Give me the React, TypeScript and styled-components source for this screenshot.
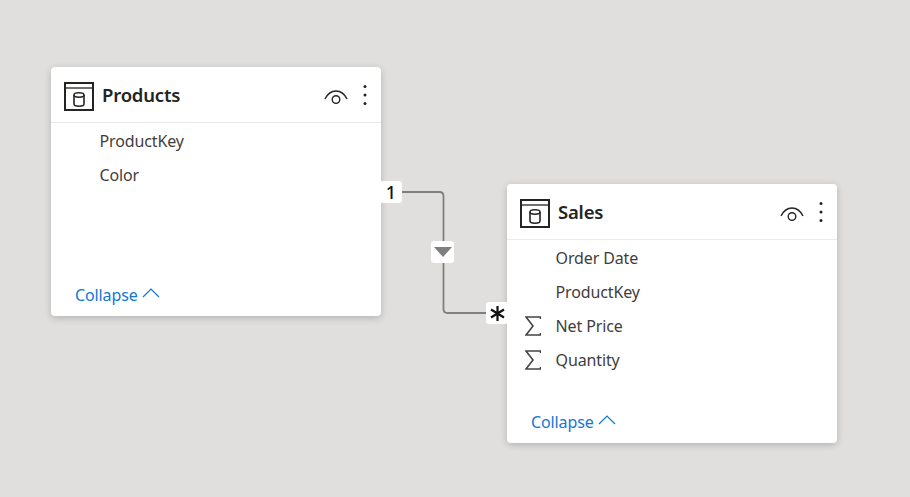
import styled, { createGlobalStyle } from 'styled-components';

const Global = createGlobalStyle`
  html, body { margin: 0; padding: 0; }
  body { background: #e0dfdd; font-family: 'Noto Sans', 'Open Sans', sans-serif; }
`;

const Canvas = styled.div`
  position: relative;
  width: 910px;
  height: 497px;
  overflow: hidden;
  background: #e0dfdd;
`;

const Card = styled.section<{ $x: number; $y: number; $w: number; $h: number }>`
  position: absolute;
  left: ${p => p.$x}px;
  top: ${p => p.$y}px;
  width: ${p => p.$w}px;
  height: ${p => p.$h}px;
  display: flex;
  flex-direction: column;
  background: #fff;
  border-radius: 4px;
  box-shadow: 0 2px 7px rgba(0, 0, 0, 0.2);
`;

const Header = styled.header`
  height: 56px;
  flex: none;
  box-sizing: border-box;
  display: flex;
  align-items: center;
  padding: 0 13px;
  border-bottom: 1px solid #eaeaea;
`;

const IconSlot = styled.span`
  display: flex;
  margin-top: 3px;
`;

const Title = styled.h2`
  flex: 1;
  margin: 0 0 0 8px;
  font-size: 18.5px;
  font-weight: 600;
  color: #252423;
  letter-spacing: -0.2px;
`;

const Fields = styled.ul`
  flex: 1;
  list-style: none;
  margin: 0;
  padding: 1px 0 0;
`;

const Field = styled.li`
  height: 34px;
  display: flex;
  align-items: center;
  font-size: 16px;
  color: #3f3e3d;
  letter-spacing: -0.12px;
`;

const FieldIcon = styled.span`
  width: 48.5px;
  flex: none;
  display: flex;
  justify-content: flex-end;
  padding-right: 14.5px;
  box-sizing: border-box;
  height: 24px;
  align-items: center;
`;

const Collapse = styled.button`
  align-self: flex-start;
  display: flex;
  align-items: center;
  gap: 4px;
  margin: 0 0 10px 24px;
  padding: 0;
  border: 0;
  background: none;
  font: inherit;
  font-size: 16px;
  letter-spacing: -0.12px;
  color: #0f78d4;
`;

const Lines = styled.svg`
  position: absolute;
  left: 0;
  top: 0;
`;

const Badge = styled.div<{ $x: number; $y: number; $size?: number }>`
  position: absolute;
  left: ${p => p.$x}px;
  top: ${p => p.$y}px;
  width: ${p => p.$size ?? 22}px;
  height: 22px;
  display: flex;
  align-items: center;
  justify-content: center;
  background: #fff;
  border-radius: 3px;
  color: #111;
  font-size: 18px;
  font-weight: 500;
`;

const TableIcon = () => (
  <svg width="30" height="29" viewBox="0 0 30 29" fill="none" stroke="#252423" strokeWidth="2">
    <rect x="1" y="1" width="28" height="27" />
    <path d="M1 6h28" strokeWidth="1.3" />
    <path d="M10 13c0-3 10-3 10 0v9c0 3-10 3-10 0z" strokeWidth="1.6" />
    <path d="M10 13c0 3 10 3 10 0" strokeWidth="1.6" />
  </svg>
);

const Eye = () => (
  <svg width="24" height="15" viewBox="0 0 24 15" fill="none" stroke="#252423" strokeWidth="1.4" style={{ marginTop: 3 }}>
    <path d="M1 10C4 4 8 2 12 2s8 2 11 8" />
    <circle cx="12" cy="10.500" r="3.800" />
  </svg>
);

const More = () => (
  <svg width="6" height="22" viewBox="0 0 6 22" fill="#252423" style={{ marginLeft: 14 }}>
    <circle cx="3" cy="2.500" r="1.500" />
    <circle cx="3" cy="11" r="1.500" />
    <circle cx="3" cy="19.500" r="1.500" />
  </svg>
);

const Sigma = () => (
  <svg width="16" height="20" viewBox="0 0 16 20" fill="none" stroke="#444" strokeWidth="1.6">
    <path d="M15.500 3V1H1l7 9-7 9h14.500v-2" />
  </svg>
);

const Chevron = () => (
  <svg width="18" height="10" viewBox="0 0 18 10" fill="none" stroke="#0f78d4" strokeWidth="1.2" style={{ marginTop: -5 }}>
    <path d="M1 9l8-8 8 8" />
  </svg>
);

type Col = { name: string; sum?: boolean };

const TableCard = ({ title, x, y, w, h, cols }: { title: string; x: number; y: number; w: number; h: number; cols: Col[] }) => (
  <Card $x={x} $y={y} $w={w} $h={h}>
    <Header>
      <IconSlot><TableIcon /></IconSlot>
      <Title>{title}</Title>
      <Eye />
      <More />
    </Header>
    <Fields>
      {cols.map(c => (
        <Field key={c.name}>
          <FieldIcon>{c.sum && <Sigma />}</FieldIcon>
          {c.name}
        </Field>
      ))}
    </Fields>
    <Collapse>Collapse <Chevron /></Collapse>
  </Card>
);

export default function App() {
  return (
    <Canvas>
      <Global />
      <Lines width="910" height="497" fill="none" stroke="#7f7f7f" strokeWidth="1.8">
        <path d="M400 192h39.500q4 0 4 4v113q0 4 4 4h42" />
      </Lines>
      <TableCard title="Products" x={51} y={67} w={329.5} h={249} cols={[{ name: 'ProductKey' }, { name: 'Color' }]} />
      <TableCard
        title="Sales"
        x={507}
        y={184}
        w={330}
        h={259}
        cols={[{ name: 'Order Date' }, { name: 'ProductKey' }, { name: 'Net Price', sum: true }, { name: 'Quantity', sum: true }]}
      />
      <Badge $x={380} $y={181}>1</Badge>
      <Badge $x={431} $y={241} $size={23}>
        <svg width="18" height="10" viewBox="0 0 18 10"><path d="M0 0h18l-9 10z" fill="#7f7f7f" /></svg>
      </Badge>
      <Badge $x={486} $y={302}>
        <svg width="15" height="15" viewBox="0 0 15 15" stroke="#111" strokeWidth="2.2"><path d="M7.500 0v15M1 3.500l13 8M14 3.500l-13 8" /></svg>
      </Badge>
    </Canvas>
  );
}
